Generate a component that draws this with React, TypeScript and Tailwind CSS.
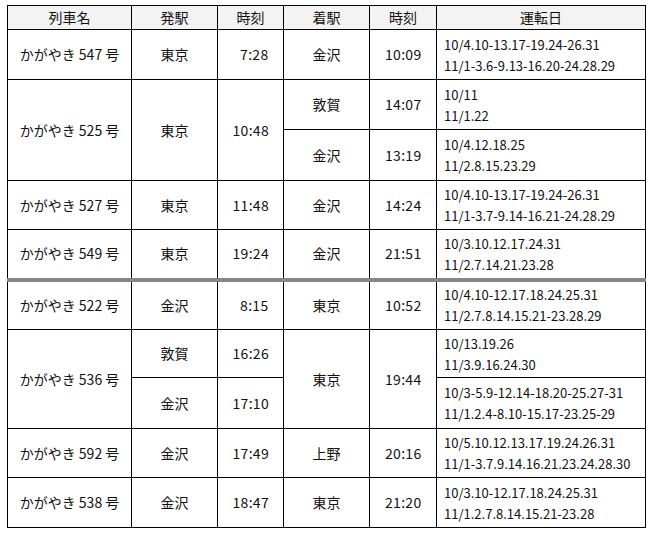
import React from 'react';

const cell = 'border border-black text-center align-middle p-0';
const dateCell = 'border border-black text-left align-middle pl-[7px] text-[13px] leading-[21px]';
const sep = 'border-b-[4px] border-b-[#878787]';

const Time: React.FC<{ t: string }> = ({ t }) => (
    <span className="inline-block w-[36px] text-right tabular-nums tracking-[0.3px]">{t}</span>
);

const Dates: React.FC<{ a: string; b: string }> = ({ a, b }) => (
    <>
        <div>{a}</div>
        <div>{b}</div>
    </>
);

export default function App() {
    return (
        <div
            className="bg-white w-[655px] h-[533px] pl-[7px] pt-[5px] text-[14px] text-[#111]"
            style={{ fontFamily: '"Noto Sans CJK JP", "Noto Sans", sans-serif' }}
        >
            <table className="border-collapse table-fixed w-[638px]">
                <colgroup>
                    <col className="w-[124px]" />
                    <col className="w-[86px]" />
                    <col className="w-[66px]" />
                    <col className="w-[86px]" />
                    <col className="w-[67px]" />
                    <col className="w-[209px]" />
                </colgroup>
                <thead>
                    <tr className="h-[24px] bg-[#f3f3f3]">
                        <th className={`${cell} font-normal`}>列車名</th>
                        <th className={`${cell} font-normal`}>発駅</th>
                        <th className={`${cell} font-normal`}>時刻</th>
                        <th className={`${cell} font-normal`}>着駅</th>
                        <th className={`${cell} font-normal`}>時刻</th>
                        <th className={`${cell} font-normal`}>運転日</th>
                    </tr>
                </thead>
                <tbody>
                    {/* 下り */}
                    <tr className="h-[50px]">
                        <td className={cell}>かがやき 547 号</td>
                        <td className={cell}>東京</td>
                        <td className={cell}><Time t="7:28" /></td>
                        <td className={cell}>金沢</td>
                        <td className={cell}><Time t="10:09" /></td>
                        <td className={dateCell}><Dates a="10/4.10-13.17-19.24-26.31" b="11/1-3.6-9.13-16.20-24.28.29" /></td>
                    </tr>
                    <tr className="h-[50px]">
                        <td className={cell} rowSpan={2}>かがやき 525 号</td>
                        <td className={cell} rowSpan={2}>東京</td>
                        <td className={cell} rowSpan={2}><Time t="10:48" /></td>
                        <td className={cell}>敦賀</td>
                        <td className={cell}><Time t="14:07" /></td>
                        <td className={dateCell}><Dates a="10/11" b="11/1.22" /></td>
                    </tr>
                    <tr className="h-[51px]">
                        <td className={cell}>金沢</td>
                        <td className={cell}><Time t="13:19" /></td>
                        <td className={dateCell}><Dates a="10/4.12.18.25" b="11/2.8.15.23.29" /></td>
                    </tr>
                    <tr className="h-[49px]">
                        <td className={cell}>かがやき 527 号</td>
                        <td className={cell}>東京</td>
                        <td className={cell}><Time t="11:48" /></td>
                        <td className={cell}>金沢</td>
                        <td className={cell}><Time t="14:24" /></td>
                        <td className={dateCell}><Dates a="10/4.10-13.17-19.24-26.31" b="11/1-3.7-9.14-16.21-24.28.29" /></td>
                    </tr>
                    <tr className="h-[50px]">
                        <td className={`${cell} ${sep}`}>かがやき 549 号</td>
                        <td className={`${cell} ${sep}`}>東京</td>
                        <td className={`${cell} ${sep}`}><Time t="19:24" /></td>
                        <td className={`${cell} ${sep}`}>金沢</td>
                        <td className={`${cell} ${sep}`}><Time t="21:51" /></td>
                        <td className={`${dateCell} ${sep}`}><Dates a="10/3.10.12.17.24.31" b="11/2.7.14.21.23.28" /></td>
                    </tr>

                    {/* 上り */}
                    <tr className="h-[50px]">
                        <td className={cell}>かがやき 522 号</td>
                        <td className={cell}>金沢</td>
                        <td className={cell}><Time t="8:15" /></td>
                        <td className={cell}>東京</td>
                        <td className={cell}><Time t="10:52" /></td>
                        <td className={dateCell}><Dates a="10/4.10-12.17.18.24.25.31" b="11/2.7.8.14.15.21-23.28.29" /></td>
                    </tr>
                    <tr className="h-[48px]">
                        <td className={cell} rowSpan={2}>かがやき 536 号</td>
                        <td className={cell}>敦賀</td>
                        <td className={cell}><Time t="16:26" /></td>
                        <td className={cell} rowSpan={2}>東京</td>
                        <td className={cell} rowSpan={2}><Time t="19:44" /></td>
                        <td className={dateCell}><Dates a="10/13.19.26" b="11/3.9.16.24.30" /></td>
                    </tr>
                    <tr className="h-[51px]">
                        <td className={cell}>金沢</td>
                        <td className={cell}><Time t="17:10" /></td>
                        <td className={dateCell}><Dates a="10/3-5.9-12.14-18.20-25.27-31" b="11/1.2.4-8.10-15.17-23.25-29" /></td>
                    </tr>
                    <tr className="h-[49px]">
                        <td className={cell}>かがやき 592 号</td>
                        <td className={cell}>金沢</td>
                        <td className={cell}><Time t="17:49" /></td>
                        <td className={cell}>上野</td>
                        <td className={cell}><Time t="20:16" /></td>
                        <td className={dateCell}><Dates a="10/5.10.12.13.17.19.24.26.31" b="11/1-3.7.9.14.16.21.23.24.28.30" /></td>
                    </tr>
                    <tr className="h-[50px]">
                        <td className={cell}>かがやき 538 号</td>
                        <td className={cell}>金沢</td>
                        <td className={cell}><Time t="18:47" /></td>
                        <td className={cell}>東京</td>
                        <td className={cell}><Time t="21:20" /></td>
                        <td className={dateCell}><Dates a="10/3.10-12.17.18.24.25.31" b="11/1.2.7.8.14.15.21-23.28" /></td>
                    </tr>
                </tbody>
            </table>
        </div>
    );
}
